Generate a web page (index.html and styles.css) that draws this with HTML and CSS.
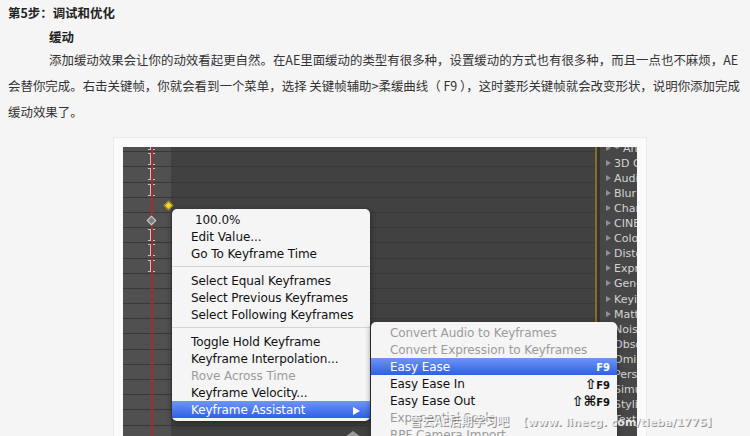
FILE: index.html
```html
<!DOCTYPE html>
<html lang="zh">
<head>
<meta charset="utf-8">
<title>第5步调试和优化</title>
<link rel="stylesheet" href="styles.css">
</head>
<body>
<svg class="defs" width="0" height="0" aria-hidden="true"><symbol id="ibeam" viewBox="0 0 7 12"><path d="M0 .5h7M0 11.5h7M2.5 1v10M4.5 1v10" fill="none" stroke="#c4c4c4"/></symbol></svg>
<article class="article">
  <h3 class="step">第5步<span class="cp">&#xFF1A;</span>调试和优化</h3>
  <h4 class="sub">缓动</h4>
  <p class="para">添加缓动效果会让你的动效看起更自然。在AE里面缓动的类型有很多种<span class="cp">&#xFF0C;</span>设置缓动的方式也有很多种<span class="cp">&#xFF0C;</span>而且一点也不麻烦<span class="cp">&#xFF0C;</span>AE会替你完成。右击关键帧<span class="cp">&#xFF0C;</span>你就会看到一个菜单<span class="cp">&#xFF0C;</span>选择 关键帧辅助&gt;柔缓曲线&#xFF08; F9 &#xFF09;<span class="cp">&#xFF0C;</span>这时菱形关键帧就会改变形状<span class="cp">&#xFF0C;</span>说明你添加完成缓动效果了。</p>
  <div class="frame">
    <div class="shot">
      <div class="col-a">
        <div class="row"><svg class="ibeam"><use href="#ibeam"/></svg></div>
        <div class="row"><svg class="ibeam"><use href="#ibeam"/></svg></div>
        <div class="row"><svg class="ibeam"><use href="#ibeam"/></svg></div>
        <div class="row"><svg class="ibeam"><use href="#ibeam"/></svg></div>
        <div class="row"></div>
        <div class="row"></div>
        <div class="row"><svg class="ibeam"><use href="#ibeam"/></svg></div>
        <div class="row"><svg class="ibeam"><use href="#ibeam"/></svg></div>
        <div class="row"><svg class="ibeam"><use href="#ibeam"/></svg></div>
        <div class="row"></div>
        <div class="row"></div>
        <div class="row"></div>
        <div class="row"></div>
        <div class="row"></div>
        <div class="row"></div>
        <div class="row"></div>
        <div class="row"></div>
        <div class="row"></div>
        <div class="row"></div>
        <div class="row"></div>
      </div>
      <div class="col-b">
        <div class="row"></div><div class="row"></div><div class="row"></div><div class="row"></div>
        <div class="row"></div><div class="row"></div><div class="row"></div><div class="row"></div>
        <div class="row"></div><div class="row"></div><div class="row"></div><div class="row"></div>
        <div class="row"></div><div class="row"></div><div class="row"></div><div class="row"></div>
        <div class="row"></div><div class="row"></div><div class="row"></div><div class="row"></div>
      </div>
      <div class="rule"></div>
      <ul class="fx">
        <li>* Animation</li><li>3D Channel</li><li>Audio</li><li>Blur &amp; Sharpen</li><li>Channel</li><li>CINEMA 4D</li><li>Color</li><li>Distort</li><li>Expression</li><li>Generate</li><li>Keying</li><li>Matte</li><li>Noise</li><li>Obsolete</li><li>Omino</li><li>Perspective</li><li>Simulation</li><li>Stylize</li><li>Text</li>
      </ul>
      <span class="playhead"></span>
      <span class="key key-gold"></span>
      <span class="key key-grey"></span>
      <span class="peak"></span>
      <ul class="menu menu-main">
        <li class="pct">100.0%</li>
        <li>Edit Value...</li>
        <li>Go To Keyframe Time</li>
        <li class="sep"></li>
        <li>Select Equal Keyframes</li>
        <li>Select Previous Keyframes</li>
        <li>Select Following Keyframes</li>
        <li class="sep"></li>
        <li>Toggle Hold Keyframe</li>
        <li>Keyframe Interpolation...</li>
        <li class="off">Rove Across Time</li>
        <li>Keyframe Velocity...</li>
        <li class="on"><span>Keyframe Assistant</span><i class="arrow"></i></li>
      </ul>
      <ul class="menu menu-sub">
        <li class="off">Convert Audio to Keyframes</li>
        <li class="off">Convert Expression to Keyframes</li>
        <li class="on"><span>Easy Ease</span><b>F9</b></li>
        <li><span>Easy Ease In</span><b><em>⇧</em>F9</b></li>
        <li><span>Easy Ease Out</span><b><em>⇧⌘</em>F9</b></li>
        <li class="off">Exponential Scale</li>
        <li class="off">RPF Camera Import</li>
      </ul>
    </div>
  </div>
</article>
<div class="mark">雪云AE后期学习吧 <span class="mark-url">【www. linecg. com/tieba/1775】</span></div>
</body>
</html>
```
FILE: styles.css
```css
* { box-sizing: border-box; }
html, body { margin: 0; height: 436px; overflow: hidden; }
body {
  position: relative;
  background: #f5f5f5;
  color: #2b2b2b;
  font-family: "Noto Sans CJK SC", "Liberation Sans", sans-serif;
  font-size: 12.45px;
}
.defs { position: absolute; }
.cp { font-family: "Noto Sans CJK TC", sans-serif; }
.article { padding: 0 2px 0 8px; }
.step, .sub { margin: 0; font-size: 12.45px; font-weight: 700; line-height: 26px; color: #222; }
.step { height: 24px; }
.sub { padding-left: 41px; height: 23px; }
.para { margin: 0; text-indent: 41px; line-height: 26px; width: 740px; color: #333; }
.frame {
  margin: 12px 0 0 105px;
  width: 534px;
  height: 299px;
  padding: 9px 10px 0 9px;
  background: #fbfbfb;
  border: 1px solid #ececec;
  border-bottom: 0;
}
.shot {
  position: relative;
  display: flex;
  width: 514px;
  height: 290px;
  background: #3f3f3f;
  overflow: hidden;
}
.col-a { flex: none; width: 48px; background: #505050; margin-top: -10px; }
.col-b { flex: none; width: 424px; background: #414141; margin-top: -10px; }
.row {
  display: flex;
  justify-content: center;
  align-items: center;
  height: 15.2px;
  border-bottom: 1px solid #383838;
}
.col-a .row { padding-left: 9px; }
.ibeam { display: block; width: 7px; height: 12px; }
.rule {
  flex: none;
  width: 5px;
  border-left: 2px solid #8f6a22;
  background: #333;
}
.fx {
  flex: 1;
  margin: -6.4px 0 0;
  padding: 0 0 0 6px;
  list-style: none;
  background: #474747;
  overflow: hidden;
  white-space: nowrap;
  color: #d4d4d4;
  font: 400 11px/15.09px "DejaVu Sans", sans-serif;
}
.fx li { position: relative; padding-left: 8px; }
.fx li::before {
  content: "";
  position: absolute;
  left: 0;
  top: 4px;
  border-left: 5px solid #909090;
  border-top: 3.5px solid transparent;
  border-bottom: 3.5px solid transparent;
}
.playhead { position: absolute; z-index: 1; left: 28px; top: 0; bottom: 0; width: 2px; background: #a82a30; }
.key { position: absolute; z-index: 2; width: 7px; height: 7px; transform: rotate(45deg); }
.key-gold { left: 42px; top: 55px; background: #f3d32c; border: 1px solid #8a7a20; }
.key-grey { left: 25px; top: 70px; background: #7d7d7d; border: 1px solid #cfcfcf; }
.peak {
  position: absolute;
  left: 222px;
  top: 284px;
  border-left: 8px solid transparent;
  border-right: 8px solid transparent;
  border-bottom: 6px solid #9a9a9a;
}
.menu {
  position: absolute;
  z-index: 3;
  margin: 0;
  padding: 2px 0 0;
  list-style: none;
  background: #f5f5f5;
  border-radius: 5px;
  box-shadow: 0 2px 6px rgba(0,0,0,.45);
  color: #111;
  font: 12px/15px "DejaVu Sans", sans-serif;
  letter-spacing: -.08px;
  white-space: nowrap;
}
.menu li { height: 17px; padding: 2px 7px 0 19px; display: flex; justify-content: space-between; align-items: center; }
.menu-main { left: 49px; top: 62px; width: 198px; height: 212px; }
.menu-sub { left: 248px; top: 175px; width: 246px; height: 140px; }
.menu .pct { padding-left: 23px; }
.menu .sep { height: 10px; position: relative; }
.menu .sep::after { content: ""; position: absolute; left: 0; right: 0; top: 4px; height: 1px; background: #d4d4d4; }
.menu .off { color: #9b9b9b; }
.menu .on {
  color: #fff;
  background: linear-gradient(#6f95f2, #2f5fe6);
}
.menu b { font-weight: 700; font-size: 10px; }
.menu em { font-style: normal; font-size: 14px; line-height: 14px; }
.arrow {
  border-left: 7px solid #fff;
  border-top: 4px solid transparent;
  border-bottom: 4px solid transparent;
  margin-right: 3px;
}
.mark {
  position: absolute;
  left: 410px;
  top: 411px;
  z-index: 4;
  color: rgba(245,245,245,.9);
  font: 700 12px/20px "Noto Sans CJK SC", sans-serif;
  text-shadow: 1px 1px 0 rgba(80,80,80,.6);
  white-space: nowrap;
}
.mark-url { margin-left: 5px; font-family: "DejaVu Sans", "Noto Sans CJK SC", sans-serif; font-size: 11px; }
```
